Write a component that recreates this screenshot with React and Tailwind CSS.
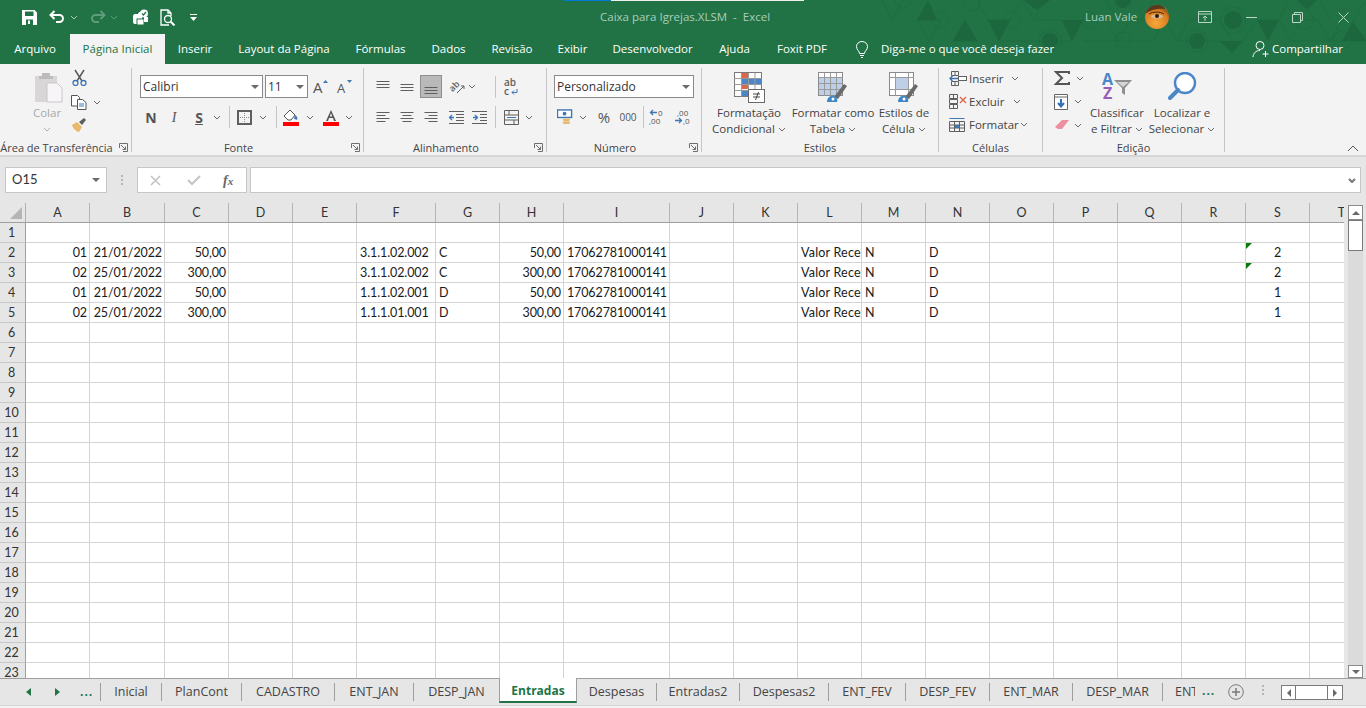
import React from "react";

const Chev = ({ className = "", color = "#6a6a6a", width = 1 }) => (
  <svg width="8" height="5" viewBox="0 0 8 5" className={`shrink-0 ${className}`} fill="none" stroke={color} strokeWidth={width}>
    <path d="M1 1l3 3 3-3" />
  </svg>
);

const Caret = () => (
  <svg width="8" height="4" viewBox="0 0 8 4" fill="#6a6a6a" className="shrink-0">
    <path d="M0 0h8L4 4z" />
  </svg>
);

// fixed width slot so the icons land on the same pixels as the ribbon
const Slot = ({ className = "", children }) => (
  <div className={`flex shrink-0 items-center justify-center ${className}`}>{children}</div>
);

const Sep = ({ className = "" }) => <div className={`h-[22px] w-px shrink-0 bg-[#c6c6c6] ${className}`}></div>;

const Lines = ({ ys, ws, x = [] }) => (
  <svg width="16" height="16" viewBox="0 0 16 16" stroke="#5f5f5f" strokeWidth="1">
    {ys.map((y, i) => (
      <path key={y} d={`M${x[i] ?? 1.5} ${y + 0.5}h${ws[i]}`} />
    ))}
  </svg>
);

const Launcher = () => (
  <svg width="9" height="9" viewBox="0 0 9 9" fill="none" stroke="#6f6f6f" className="absolute bottom-0 right-[3px]">
    <path d="M.5 5V.5H8.500V8.500H4" />
    <path d="M2 2l4.500 4.500M6.500 3.500v3h-3" />
  </svg>
);

function Group({ w, label, launcher, children }) {
  return (
    <div className={`relative flex h-[84px] shrink-0 flex-col border-r border-[#c6c6c6] ${w}`}>
      <div className="h-[68px]">{children}</div>
      <div className={`h-[16px] whitespace-nowrap text-center text-[11px] leading-[24px] text-[#444] ${launcher ? "pr-[18px]" : ""}`}>{label}</div>
      {launcher && <Launcher />}
    </div>
  );
}

function HexPattern() {
  const line = "#196a3e";
  const dark = "#1d673e";
  return (
    <svg width="1366" height="64" viewBox="0 0 1366 64" className="pointer-events-none absolute left-0 top-0" fill="none" stroke={line} strokeOpacity=".6">
      <path d="M882 0l10 20 11-20M917 20h24M917 20l12 21 12-21M929 41l-12 21M953 41h24M965 20l12 21M965 20l-12 21M977 0l11 20h22l-11 21-11-21M999 41h51M1010 20l12-20M1022 0l12 20 12-20M1034 20h28l10 21 11-21h24l11 21 12-21h20M1050 41h22M1083 41h70M1118 20l-12-20M1142 20l11-20M1165 20l-12 21M1165 20l12 21 12-21h31l12 21M1177 41h43M1243 41l14-21h22l11 21 11-21h17l12 21 12-21M1290 41h52M1342 41h24M1353 22l-11 19M1279 20l10-20M1330 20l-10-20M1353 22l13-22" />
      <circle cx="903" cy="0" r="8" />
      <circle cx="940" cy="20" r="8" />
      <circle cx="972" cy="3" r="8" />
      <circle cx="1012" cy="20" r="8" />
      <circle cx="1090" cy="20" r="8" />
      <circle cx="1123" cy="40" r="8" />
      <circle cx="1050" cy="41" r="11" />
      <circle cx="1197" cy="41" r="11" />
      <circle cx="1233" cy="20" r="13" />
      <circle cx="1305" cy="20" r="9" />
      <circle cx="1342" cy="40" r="9" />
      <g fill={dark} stroke="none">
        <path d="M928 0l-11 20h20zM965 20l-12 21h24zM988 20h22l-11 21zM1062 20h21l-11 21zM1257 20h22l-11 21zM1220 41h23l-11 12zM1353 22l-11 19h24v-1zM1297 0h20l-10 10zM1023 0h27l-13 10z" />
        <circle cx="1050" cy="41" r="8" />
        <circle cx="1197" cy="41" r="8" />
        <circle cx="1233" cy="20" r="9" />
        <circle cx="1123" cy="0" r="8" />
      </g>
    </svg>
  );
}

function Avatar() {
  return (
    <svg width="24" height="24" viewBox="0 0 24 24" className="shrink-0">
      <defs>
        <radialGradient id="face" cx=".45" cy=".75" r=".75">
          <stop offset="0" stopColor="#f6a83c" />
          <stop offset=".7" stopColor="#d97c22" />
          <stop offset="1" stopColor="#7a4a18" />
        </radialGradient>
        <clipPath id="round">
          <circle cx="12" cy="12" r="12" />
        </clipPath>
      </defs>
      <g clipPath="url(#round)">
        <rect width="24" height="24" fill="url(#face)" />
        <path d="M0 0h22v4C14 3 6 4 0 9z" fill="#5a3a1a" />
        <path d="M17 0h7v7z" fill="#f5f0e6" />
        <ellipse cx="12" cy="11.500" rx="6" ry="2" fill="#d8b890" />
        <circle cx="12" cy="11" r="2" fill="#2a1a10" />
        <path d="M4 9c4-2.500 11-2.500 15 0" stroke="#3a2410" strokeWidth="1" fill="none" />
      </g>
    </svg>
  );
}

function TitleBar() {
  return (
    <div className="relative flex h-[34px] items-center text-white">
      <div className="absolute left-[563px] top-0 flex h-px">
        <div className="w-[48px] bg-[#0078d7]"></div>
        <div className="w-[193px] bg-[#f0f0f0]"></div>
      </div>
      <div className="flex h-full w-[600px] shrink-0 items-center">
        <Slot className="ml-[21px] w-[16px]">
          <svg width="15" height="15" viewBox="0 0 15 15">
            <path fillRule="evenodd" fill="#fff" d="M0 0h12.500L15 2.500V15H0zM3 1.500V6h8.500V1.500zM4 9.500V15h7V9.500z" />
            <rect x="6" y="10.500" width="2" height="3.500" fill="#fff" />
          </svg>
        </Slot>
        <Slot className="ml-[11px] w-[18px]">
          <svg width="16" height="14" viewBox="0 0 16 14" fill="none" stroke="#fff" strokeWidth="2">
            <path d="M2 5h8.500a3.500 3.500 0 010 7H7M5.500 1L1.500 5l4 4" />
          </svg>
        </Slot>
        <Slot className="ml-[2px] w-[12px]"><Chev color="#a7c9b6" /></Slot>
        <Slot className="ml-[9px] w-[18px]">
          <svg width="16" height="14" viewBox="0 0 16 14" fill="none" stroke="#5f9c7c" strokeWidth="2">
            <path d="M14 5H5.500a3.500 3.500 0 000 7H9M10.500 1l4 4-4 4" />
          </svg>
        </Slot>
        <Slot className="ml-[1px] w-[12px]"><Chev color="#5f9c7c" /></Slot>
        <Slot className="ml-[10px] w-[20px]">
          <svg width="17" height="17" viewBox="0 0 17 17">
            <path d="M3 5h3l1-2h3v12H3a2 2 0 01-2-2V7a2 2 0 012-2z" fill="#fff" />
            <rect x="5" y="10" width="7" height="6" fill="#fff" stroke="#217346" />
            <path d="M12 8h4v5h-4z" fill="#fff" />
            <circle cx="12" cy="4.500" r="4" fill="#fff" />
            <path d="M10 4.500l1.500 1.500 2.500-3" stroke="#217346" strokeWidth="1.200" fill="none" />
          </svg>
        </Slot>
        <Slot className="ml-[8px] w-[20px]">
          <svg width="16" height="17" viewBox="0 0 16 17" fill="none" stroke="#fff" strokeWidth="1.300">
            <path d="M9 16H1V1h7l3 3v3" />
            <path d="M8 1v3h3" />
            <circle cx="8" cy="10" r="3.500" />
            <path d="M10.500 12.500l4 4" strokeWidth="2" />
          </svg>
        </Slot>
        <Slot className="ml-[9px] w-[12px]">
          <svg width="7" height="7" viewBox="0 0 7 7" fill="#fff">
            <path d="M0 0h7v1H0zM0 3h7L3.500 7z" />
          </svg>
        </Slot>
      </div>
      <div className="w-[485px] shrink-0 whitespace-pre text-[11.5px] text-[#a9cdb9]">Caixa para Igrejas.XLSM  -  Excel</div>
      <div className="w-[60px] shrink-0 whitespace-nowrap text-[11.5px] text-[#a9cdb9]">Luan Vale</div>
      <Avatar />
      <Slot className="ml-[28px] w-[16px]">
        <svg width="14" height="12" viewBox="0 0 14 12" fill="none" stroke="#b9d6c6">
          <path d="M.5.500h13v11H.5zM.5 3h13M7 10V5M5 7l2-2 2 2" />
        </svg>
      </Slot>
      <Slot className="ml-[30px] w-[16px]">
        <div className="h-px w-[11px] bg-[#b9d6c6]"></div>
      </Slot>
      <Slot className="ml-[30px] w-[16px]">
        <svg width="11" height="11" viewBox="0 0 11 11" fill="none" stroke="#b9d6c6">
          <path d="M.5 2.500h8v8h-8zM2.500 2.500V.5h8v8H8.500" />
        </svg>
      </Slot>
      <Slot className="ml-[30px] w-[16px]">
        <svg width="11" height="11" viewBox="0 0 11 11" fill="none" stroke="#b9d6c6">
          <path d="M.5.500l10 10M10.500.500l-10 10" />
        </svg>
      </Slot>
    </div>
  );
}

const ribbonTabs = [
  { name: "Arquivo", w: "w-[70px]" },
  { name: "Página Inicial", w: "w-[95px]", active: true },
  { name: "Inserir", w: "w-[60px]" },
  { name: "Layout da Página", w: "w-[118px]" },
  { name: "Fórmulas", w: "w-[75px]" },
  { name: "Dados", w: "w-[61px]" },
  { name: "Revisão", w: "w-[66px]" },
  { name: "Exibir", w: "w-[55px]" },
  { name: "Desenvolvedor", w: "w-[105px]" },
  { name: "Ajuda", w: "w-[59px]" },
  { name: "Foxit PDF", w: "w-[76px]" },
];

function TabsBar() {
  return (
    <div className="relative flex h-[30px] items-center text-[11.5px] text-white">
      {ribbonTabs.map((t) => (
        <div
          key={t.name}
          className={`flex h-full shrink-0 items-center justify-center whitespace-nowrap ${t.w} ${
            t.active ? "bg-[#f3f3f3] text-[#217346]" : ""
          }`}
        >
          {t.name}
        </div>
      ))}
      <svg width="14" height="17" viewBox="0 0 14 17" fill="none" stroke="#fff" className="ml-[15px] shrink-0">
        <path d="M4.500 12.500c0-2.500-3-3.500-3-7a5.500 5 0 0111 0c0 3.500-3 4.500-3 7zM5 14.500h4M6 16.500h2" />
      </svg>
      <div className="ml-[12px] w-[371px] shrink-0 whitespace-nowrap">Diga-me o que você deseja fazer</div>
      <svg width="19" height="18" viewBox="0 0 19 18" fill="none" stroke="#fff" className="shrink-0">
        <circle cx="8" cy="5.500" r="4" />
        <path d="M1 17c.5-4 3-6.500 7-6.500M13.500 11v6M10.500 14h6" />
      </svg>
      <div className="ml-[1px] whitespace-nowrap">Compartilhar</div>
    </div>
  );
}

const Select = ({ w, text }) => (
  <div className={`flex h-[23px] shrink-0 items-center justify-between border border-[#8a8a8a] bg-white pl-[2px] pr-[3px] text-[12px] text-[#333] ${w}`}>
    <span>{text}</span>
    <Caret />
  </div>
);

function BigA({ up }) {
  return (
    <svg width="20" height="18" viewBox="0 0 20 18">
      <text x="2" y="15" fontFamily="'Open Sans', sans-serif" fontSize={up ? 15 : 13} fill="#555">A</text>
      <path d={up ? "M12 5l2.500-3 2.500 3z" : "M12 2h5l-2.500 3z"} fill="#3f76b5" />
    </svg>
  );
}

function Clipboard() {
  return (
    <Group w="w-[132px]" label="Área de Transferência" launcher>
      <div className="flex h-full">
        <div className="ml-[27px] flex w-[40px] flex-col items-center pt-[4px] text-[#a9a9a9]">
          <svg width="30" height="31" viewBox="0 0 30 31" className="ml-[3px]">
            <path d="M1 4h22v26H1z" fill="#d8d6d6" />
            <path d="M8 1h8v3h3v3H5V4h3z" fill="#bdbbbb" />
            <path d="M13 11h10l5 5v14H13z" fill="#f7f5f7" stroke="#c9c7c9" />
          </svg>
          <div className="mt-[2px] text-[11.5px] leading-[16px]">Colar</div>
          <Chev className="mt-[6px]" color="#b0b0b0" />
        </div>
        <div className="ml-[3px] flex flex-col">
          <div className="flex h-[20px] w-[18px] items-center justify-center">
            <svg width="15" height="17" viewBox="0 0 15 17" fill="none">
              <path d="M3 1l7 11M12 1L5 12" stroke="#555" strokeWidth="1.400" />
              <circle cx="3.500" cy="14" r="2.500" stroke="#3f76b5" strokeWidth="1.300" />
              <circle cx="11.500" cy="14" r="2.500" stroke="#3f76b5" strokeWidth="1.300" />
            </svg>
          </div>
          <div className="mt-[4px] flex h-[22px] items-center">
            <svg width="16" height="15" viewBox="0 0 16 15" fill="#fff" stroke="#555" className="ml-[1px] shrink-0">
              <path d="M.5.500h6l2 2V11H.5z" />
              <path d="M6.500 4.500h5l3.500 3V14.500H6.500z" />
              <path d="M8 9h5M8 11h5" stroke="#3f76b5" />
            </svg>
            <Chev className="ml-[6px]" />
          </div>
          <div className="mt-[1px] flex h-[22px] w-[18px] items-center justify-center">
            <svg width="16" height="16" viewBox="0 0 16 16">
              <path d="M1 8l5-3 5 5-3 5C6 15 2 12 1 8z" fill="#e8b96b" />
              <path d="M8 5l5-4 2 2-4 5z" fill="#5e5e5e" />
            </svg>
          </div>
        </div>
      </div>
    </Group>
  );
}

function Font() {
  return (
    <Group w="w-[232px]" label="Fonte" launcher>
      <div className="flex pl-[8px] pt-[7px]">
        <Select w="w-[123px]" text="Calibri" />
        <Select w="w-[43px] ml-[2px]" text="11" />
        <Slot className="ml-[3px] h-[23px] w-[20px]"><BigA up /></Slot>
        <Slot className="ml-[4px] h-[23px] w-[20px]"><BigA /></Slot>
      </div>
      <div className="mt-[8px] flex h-[22px] items-center text-[14px] text-[#555]">
        <Slot className="ml-[9px] w-[20px] font-bold">N</Slot>
        <Slot className="ml-[3px] w-[20px] font-['Liberation_Serif'] italic">I</Slot>
        <Slot className="ml-[5px] w-[20px] font-bold underline">S</Slot>
        <Slot className="ml-[2px] w-[12px]"><Chev /></Slot>
        <Sep className="ml-[6px]" />
        <svg width="15" height="15" viewBox="0 0 15 15" fill="none" className="ml-[7px] shrink-0">
          <rect x="1" y="1" width="13" height="13" stroke="#5f5f5f" strokeWidth="2" />
          <path d="M7.500 3v9M3 7.500h9" stroke="#8a8a8a" strokeDasharray="1 1" />
        </svg>
        <Slot className="ml-[5px] w-[12px]"><Chev /></Slot>
        <Sep className="ml-[7px]" />
        <svg width="16" height="17" viewBox="0 0 16 17" className="ml-[6px] shrink-0">
          <path d="M1 7l6-6 5 5-4 5H5z" fill="#fff" stroke="#555" />
          <path d="M12 6c2 1 3 3 2 5-1-1-2-1-3-1z" fill="#3f76b5" />
          <rect y="13" width="16" height="4" fill="#f00" />
        </svg>
        <Slot className="ml-[5px] w-[12px]"><Chev /></Slot>
        <svg width="16" height="17" viewBox="0 0 16 17" className="ml-[7px] shrink-0">
          <path d="M8 1L3 12h2l1-3h4l1 3h2zM6.800 7.500L8 4l1.200 3.500z" fill="#555" fillRule="evenodd" />
          <rect y="13" width="16" height="4" fill="#f00" />
        </svg>
        <Slot className="ml-[4px] w-[12px]"><Chev /></Slot>
      </div>
    </Group>
  );
}

function Alignment() {
  return (
    <Group w="w-[183px]" label="Alinhamento" launcher>
      <div className="mt-[7px] flex h-[23px] items-center">
        <Slot className="ml-[11px] w-[16px]"><Lines ys={[2, 5, 8]} ws={[13, 13, 13]} /></Slot>
        <Slot className="ml-[8px] w-[16px]"><Lines ys={[5, 8, 11]} ws={[13, 13, 13]} /></Slot>
        <Slot className="ml-[5px] h-[23px] w-[22px] border border-[#8f8f8f] bg-[#b9b9b9]"><Lines ys={[8, 11, 14]} ws={[13, 13, 13]} /></Slot>
        <Slot className="ml-[6px] w-[18px]">
          <svg width="17" height="17" viewBox="0 0 17 17" fill="none">
            <text x="1" y="12" fontSize="9" fontWeight="600" fill="#5f5f5f" fontFamily="'Open Sans', sans-serif" transform="rotate(-45 5 10)">ab</text>
            <path d="M8 15l7-7M15 8h-3M15 8v3" stroke="#5f5f5f" />
          </svg>
        </Slot>
        <Slot className="w-[12px]"><Chev /></Slot>
        <Sep className="ml-[17px]" />
        <Slot className="ml-[7px] w-[16px]">
          <svg width="16" height="18" viewBox="0 0 16 18" fill="none">
            <text x="1" y="8" fontSize="10" fontWeight="600" fill="#5f5f5f" fontFamily="'Open Sans', sans-serif">ab</text>
            <text x="1" y="17" fontSize="10" fontWeight="600" fill="#5f5f5f" fontFamily="'Open Sans', sans-serif">c</text>
            <path d="M14 11v3.500H9M11 12.500l-2 2 2 2" stroke="#3f76b5" />
          </svg>
        </Slot>
      </div>
      <div className="mt-[8px] flex h-[22px] items-center">
        <Slot className="ml-[11px] w-[16px]"><Lines ys={[3, 6, 9, 12]} ws={[13, 9, 13, 9]} /></Slot>
        <Slot className="ml-[8px] w-[16px]"><Lines ys={[3, 6, 9, 12]} ws={[13, 9, 13, 9]} x={[1.5, 3.5, 1.5, 3.5]} /></Slot>
        <Slot className="ml-[8px] w-[16px]"><Lines ys={[3, 6, 9, 12]} ws={[13, 9, 13, 9]} x={[1.5, 5.5, 1.5, 5.5]} /></Slot>
        <Slot className="ml-[9px] w-[16px]">
          <svg width="16" height="14" viewBox="0 0 16 14" fill="none" stroke="#5f5f5f">
            <path d="M1 1.500h15M8 4.500h8M8 7.500h8M8 10.500h8M1 13.500h15" />
            <path d="M6 7.500H2M4 5L1.500 7.500 4 10" stroke="#3f76b5" strokeWidth="1.300" />
          </svg>
        </Slot>
        <Slot className="ml-[8px] w-[16px]">
          <svg width="16" height="14" viewBox="0 0 16 14" fill="none" stroke="#5f5f5f">
            <path d="M0 1.500h15M8 4.500h7M8 7.500h7M8 10.500h7M0 13.500h15" />
            <path d="M1 7.500h4M3 5l2.500 2.500L3 10" stroke="#3f76b5" strokeWidth="1.300" />
          </svg>
        </Slot>
        <Sep className="ml-[7px]" />
        <Slot className="ml-[7px] w-[16px]">
          <svg width="15" height="15" viewBox="0 0 15 15" fill="none" stroke="#5f5f5f">
            <path d="M.5.500h14v14H.5zM.5 5h14M.5 10h14M5 .5V5M10 10v4.500" />
            <path d="M3 7.500h9" stroke="#3f76b5" />
          </svg>
        </Slot>
        <Slot className="ml-[4px] w-[12px]"><Chev /></Slot>
      </div>
    </Group>
  );
}

function NumberGroup() {
  return (
    <Group w="w-[155px]" label="Número" launcher>
      <div className="pl-[7px] pt-[7px]">
        <Select w="w-[140px]" text="Personalizado" />
      </div>
      <div className="mt-[8px] flex h-[22px] items-center text-[#555]">
        <Slot className="ml-[10px] w-[16px]">
          <svg width="17" height="16" viewBox="0 0 17 16">
            <rect x=".5" y=".5" width="15" height="8" fill="#fff" stroke="#3f76b5" strokeWidth="1.500" />
            <circle cx="8" cy="4.500" r="2" fill="#3f76b5" />
            <ellipse cx="10" cy="11" rx="4" ry="1.500" fill="#e8b96b" />
            <ellipse cx="10" cy="14" rx="4" ry="1.500" fill="#e8b96b" />
          </svg>
        </Slot>
        <Slot className="ml-[4px] w-[12px]"><Chev /></Slot>
        <Slot className="ml-[6px] w-[18px] text-[15px]">%</Slot>
        <Slot className="ml-[5px] w-[20px] text-[10px]">000</Slot>
        <Sep className="ml-[5px]" />
        <svg width="16" height="16" viewBox="0 0 16 16" className="ml-[5px] shrink-0" fill="none">
          <path d="M8 3.500H2M4 1L1.500 3.500 4 6" stroke="#3f76b5" strokeWidth="1.300" />
          <text x="9" y="7" fontSize="8" fill="#555" fontFamily="'Open Sans', sans-serif">0</text>
          <text x="0" y="15" fontSize="8" fill="#555" fontFamily="'Open Sans', sans-serif">,00</text>
        </svg>
        <svg width="16" height="16" viewBox="0 0 16 16" className="ml-[9px] shrink-0" fill="none">
          <path d="M1 11.500h6M5 9l2.500 2.500L5 14" stroke="#3f76b5" strokeWidth="1.300" />
          <text x="3" y="7" fontSize="8" fill="#555" fontFamily="'Open Sans', sans-serif">,00</text>
          <text x="9" y="15" fontSize="8" fill="#555" fontFamily="'Open Sans', sans-serif">,0</text>
        </svg>
      </div>
    </Group>
  );
}

function BigButton({ w, icon, l1, l2 }) {
  return (
    <div className={`flex shrink-0 flex-col items-center text-[11.5px] leading-[16px] text-[#444] ${w}`}>
      <div className="flex h-[37px] justify-center pt-[4px]">{icon}</div>
      <div className="whitespace-nowrap">{l1}</div>
      <div className="flex items-center gap-[3px] whitespace-nowrap">
        {l2}
        <Chev />
      </div>
    </div>
  );
}

function CondIcon() {
  return (
    <svg width="31" height="31" viewBox="0 0 31 31">
      <rect x=".5" y=".5" width="27" height="24" fill="#fff" stroke="#7a7a7a" />
      <path d="M8 1h6v5H8zM8 12h6v5H8z" fill="#d9694a" />
      <path d="M8 7h19v5H8zM8 18h6v6H8z" fill="#4a86c8" />
      <path d="M.5 6.500h27M.5 12.500h27M.5 18.500h27M7.500 1v24M14.500 1v24M21 1v24" stroke="#9a9a9a" fill="none" />
      <rect x="14.500" y="17.500" width="16" height="13" fill="#fff" stroke="#6a6a6a" />
      <path d="M19 22h7M19 25h7M24.500 20l-3 8" stroke="#444" fill="none" />
    </svg>
  );
}

function TableIcon({ full }) {
  return (
    <svg width="31" height="31" viewBox="0 0 31 31">
      <rect x=".5" y=".5" width="24" height="23" fill="#fff" stroke="#8a8a8a" />
      {full ? (
        <>
          <rect x="1" y="5" width="23" height="18" fill="#bdd0e8" />
          <path d="M.5 5.500h24M.5 11.500h24M.5 17.500h24M6.500 1v23M12.500 1v23M18.500 1v23" stroke="#9a9a9a" fill="none" />
        </>
      ) : (
        <>
          <rect x="6" y="6" width="14" height="11" fill="#bdd0e8" />
          <path d="M.5 5.500h24M.5 17.500h24M6.500 1v23M19.500 1v23" stroke="#9a9a9a" fill="none" />
        </>
      )}
      <path d="M16 25l10-13 3 2-9 13z" fill="#6a6a6a" />
      <path d="M9 30c0-4 3-7 7-6 2 1 4 3 3 6z" fill="#3f86c8" />
      <circle cx="15" cy="27" r="1.500" fill="#fff" />
    </svg>
  );
}

function Styles() {
  return (
    <Group w="w-[237px]" label="Estilos">
      <div className="flex">
        <BigButton w="w-[94px]" icon={<CondIcon />} l1="Formatação" l2="Condicional" />
        <BigButton w="w-[74px]" icon={<TableIcon full />} l1="Formatar como" l2="Tabela" />
        <BigButton w="w-[68px]" icon={<TableIcon />} l1="Estilos de" l2="Célula" />
      </div>
    </Group>
  );
}

const cellRows = [
  {
    text: "Inserir",
    w: "w-[42px]",
    icon: (
      <>
        <path d="M2.500.500h7v4h-7zM2.500 10.500h7v4h-7zM6 .5v4M6 10.500v4M2.500 5.500v4" />
        <rect x="9.500" y="5.500" width="8" height="4" fill="#fff" stroke="#5f5f5f" />
        <path d="M9 7.500H1M3.500 5L1 7.500 3.500 10" stroke="#3f76b5" strokeWidth="1.400" />
      </>
    ),
  },
  {
    text: "Excluir",
    w: "w-[44px]",
    icon: (
      <>
        <path d="M.5.500h8v4h-8zM.5 10.500h8v4h-8zM4.500.500v4M4.500 10.500v4M.5 5.500h8v4h-8z" />
        <path d="M11 3l6 6M17 3l-6 6" stroke="#d9694a" strokeWidth="1.400" />
      </>
    ),
  },
  {
    text: "Formatar",
    w: "w-[51px]",
    icon: (
      <>
        <path d="M.5 4.500h15v10H.5zM.5 8h15M.5 11h15M5.500 4.500v10M10.500 4.500v10" />
        <path d="M.5 1.500h15" stroke="#3f76b5" />
        <rect x="6" y="8" width="4" height="3" fill="#3f76b5" stroke="none" />
      </>
    ),
  },
];

function Cells() {
  return (
    <Group w="w-[104px]" label="Células">
      <div className="-mt-px flex flex-col">
        {cellRows.map((r) => (
          <div key={r.text} className="flex h-[23px] items-center text-[11.5px] text-[#444]">
            <svg width="18" height="15" viewBox="0 0 18 15" fill="none" stroke="#5f5f5f" className="ml-[10px] shrink-0">
              {r.icon}
            </svg>
            <div className={`ml-[2px] shrink-0 ${r.w}`}>{r.text}</div>
            <Chev />
          </div>
        ))}
      </div>
    </Group>
  );
}

function Editing() {
  return (
    <Group w="w-[182px]" label="Edição">
      <div className="flex">
        <div className="flex w-[44px] shrink-0 flex-col">
          <div className="flex h-[19px] items-center pl-[11px] pt-[1px]">
            <svg width="16" height="14" viewBox="0 0 16 14" fill="none" stroke="#555" strokeWidth="2" className="shrink-0">
              <path d="M15 3V1H2l6 6-6 6h13v-2" />
            </svg>
            <Chev className="ml-[6px]" />
          </div>
          <div className="mt-[4px] flex h-[21px] items-center pl-[11px]">
            <svg width="14" height="16" viewBox="0 0 14 16" fill="#fff" stroke="#666" className="shrink-0">
              <path d="M.5.500h13v15H.5zM.5 3h13" />
              <path d="M7 5v7M4 9l3 3.500L10 9" stroke="#2f6fb5" strokeWidth="2" fill="none" />
            </svg>
            <Chev className="ml-[6px]" />
          </div>
          <div className="mt-[2px] flex h-[22px] items-center pl-[11px]">
            <svg width="16" height="13" viewBox="0 0 16 13" className="shrink-0">
              <path d="M1 8l7-7h7l-7 9H4z" fill="#ee8fa0" />
            </svg>
            <Chev className="ml-[4px]" />
          </div>
        </div>
        <BigButton
          w="w-[60px]"
          l1="Classificar"
          l2="e Filtrar"
          icon={
            <svg width="32" height="30" viewBox="0 0 32 30">
              <text x="1" y="13" fontFamily="'Open Sans', sans-serif" fontWeight="700" fontSize="16" fill="#4a86c8">A</text>
              <text x="2" y="27" fontFamily="'Open Sans', sans-serif" fontWeight="700" fontSize="16" fill="#9a5cb8">Z</text>
              <path d="M13 8h18l-7 8v7l-3-2v-5z" fill="#8f8f8f" />
              <path d="M16 10h12l-6 5z" fill="#d5d5d5" />
            </svg>
          }
        />
        <BigButton
          w="w-[66px] ml-[2px]"
          l1="Localizar e"
          l2="Selecionar"
          icon={
            <svg width="29" height="29" viewBox="0 0 29 29" fill="none" stroke="#4a86c8">
              <circle cx="17" cy="11" r="10" strokeWidth="2.400" fill="#fff" />
              <path d="M10 18l-8 8" strokeWidth="4" strokeLinecap="round" />
            </svg>
          }
        />
      </div>
    </Group>
  );
}

function Ribbon() {
  return (
    <div className="relative flex h-[93px] border-b-2 border-[#d6d6d6] bg-[#f3f3f3] pt-[4px]">
      <Clipboard />
      <Font />
      <Alignment />
      <NumberGroup />
      <Styles />
      <Cells />
      <Editing />
      <svg width="12" height="7" viewBox="0 0 12 7" fill="none" stroke="#555" className="absolute bottom-[3px] right-[7px]">
        <path d="M1 6l5-5 5 5" />
      </svg>
    </div>
  );
}

function FormulaBar() {
  return (
    <div className="flex h-[46px] bg-[#e6e6e6] pl-[5px] pt-[10px]">
      <div className="flex h-[26px] w-[102px] shrink-0 items-center justify-between border border-[#c6c6c6] bg-white pl-[6px] pr-[6px] font-['Lato'] text-[13px] text-[#333]">
        O15
        <Caret />
      </div>
      <div className="flex h-[26px] w-[30px] shrink-0 flex-col items-center justify-center gap-[2px]">
        <div className="h-[2px] w-[2px] bg-[#b5b5b5]"></div>
        <div className="h-[2px] w-[2px] bg-[#b5b5b5]"></div>
        <div className="h-[2px] w-[2px] bg-[#b5b5b5]"></div>
      </div>
      <div className="flex h-[26px] w-[110px] shrink-0 items-center border border-[#c6c6c6] bg-white">
        <svg width="11" height="11" viewBox="0 0 11 11" stroke="#c4c4c4" strokeWidth="1.600" fill="none" className="ml-[12px]">
          <path d="M1 1l9 9M10 1l-9 9" />
        </svg>
        <svg width="14" height="11" viewBox="0 0 14 11" stroke="#c4c4c4" strokeWidth="2" fill="none" className="ml-[26px]">
          <path d="M1 5l4 4 8-8" />
        </svg>
        <span className="ml-[22px] font-['Liberation_Serif'] text-[14px] font-bold italic text-[#666]">f<span className="text-[11px]">x</span></span>
      </div>
      <div className="ml-[3px] flex h-[26px] w-[1111px] shrink-0 items-center justify-end border border-[#c6c6c6] bg-white pr-[4px]">
        <Chev color="#777" width={2} />
      </div>
    </div>
  );
}

const cols = ["A", "B", "C", "D", "E", "F", "G", "H", "I", "J", "K", "L", "M", "N", "O", "P", "Q", "R", "S", "T"];

const data = [
  ["01", "21/01/2022", "50,00", "3.1.1.02.002", "C", "50,00", "2"],
  ["02", "25/01/2022", "300,00", "3.1.1.02.002", "C", "300,00", "2"],
  ["01", "21/01/2022", "50,00", "1.1.1.02.001", "D", "50,00", "1"],
  ["02", "25/01/2022", "300,00", "1.1.1.01.001", "D", "300,00", "1"],
];

function getCell(rowIdx, col) {
  const r = data[rowIdx - 2];
  if (!r) return null;
  switch (col) {
    case "A": return { v: r[0], a: "right" };
    case "B": return { v: r[1], a: "right" };
    case "C": return { v: r[2], a: "right" };
    case "F": return { v: r[3], a: "left" };
    case "G": return { v: r[4], a: "left" };
    case "H": return { v: r[5], a: "right" };
    case "I": return { v: "17062781000141", a: "right" };
    case "L": return { v: "Valor Recebido", a: "left", wide: true };
    case "M": return { v: "N", a: "left" };
    case "N": return { v: "D", a: "left" };
    case "S": return { v: r[6], a: "center", flag: rowIdx < 4 };
    default: return null;
  }
}

const alignClass = { right: "justify-end pr-[2px]", left: "justify-start pl-[3px]", center: "justify-center" };

function Sheet() {
  const rows = Array.from({ length: 23 }, (_, i) => i + 1);
  return (
    <div className="flex h-[475px] bg-[#e6e6e6]">
      <div className="w-[1344px] shrink-0 overflow-hidden">
        <div className="grid w-max grid-cols-[26px_64px_75px_64px_64px_64px_79px_64px_64px_106px_64px_64px_64px_64px_64px_64px_64px_64px_64px_64px_64px] font-['Lato'] text-[12.5px] text-[#1a1a1a]">
          <div className="flex h-[20px] items-end justify-end border-r border-b border-r-[#b0b0b0] border-b-[#9f9f9f] pb-[3px] pr-[3px]">
            <div className="h-0 w-0 border-b-[12px] border-l-[12px] border-b-[#b5b5b5] border-l-transparent"></div>
          </div>
          {cols.map((c) => (
            <div key={c} className="flex h-[20px] items-center justify-center border-r border-b border-r-[#b5b5b5] border-b-[#9f9f9f] pt-px text-[#333]">
              {c}
            </div>
          ))}
          {rows.map((n) => (
            <React.Fragment key={n}>
              <div className="flex h-[20px] items-center justify-center border-r border-b border-r-[#9f9f9f] border-b-[#c8c8c8] pr-[2px] pt-[2px] text-[#333]">
                {n}
              </div>
              {cols.map((c) => {
                const cell = getCell(n, c);
                return (
                  <div key={c} className={`relative flex h-[20px] items-center overflow-hidden whitespace-nowrap border-r border-b border-[#d4d4d4] bg-white pt-[2px] ${cell?.wide ? "tracking-[0.2px]" : "tracking-[-0.1px]"} ${cell ? alignClass[cell.a] : ""}`}>
                    {cell?.flag && (
                      <div className="absolute left-0 top-0 h-0 w-0 border-r-[6px] border-t-[6px] border-r-transparent border-t-[#0a7a0a]"></div>
                    )}
                    {cell?.v}
                  </div>
                );
              })}
            </React.Fragment>
          ))}
        </div>
      </div>
      <div className="ml-[4px] flex w-[15px] shrink-0 flex-col pt-[2px]">
        <div className="flex h-[15px] items-center justify-center border border-[#8a8a8a] bg-white">
          <svg width="8" height="4" viewBox="0 0 8 4" fill="#6a6a6a"><path d="M0 4h8L4 0z" /></svg>
        </div>
        <div className="h-[31px] border border-[#7a7a7a] bg-white"></div>
        <div className="flex-1 bg-[#dbdbdb]"></div>
        <div className="flex h-[13px] items-center justify-center border border-[#8a8a8a] bg-white">
          <Caret />
        </div>
      </div>
    </div>
  );
}

const sheets = [
  { name: "Inicial", w: "w-[61px]" },
  { name: "PlanCont", w: "w-[80px]" },
  { name: "CADASTRO", w: "w-[93px]" },
  { name: "ENT_JAN", w: "w-[79px]" },
  { name: "DESP_JAN", w: "w-[86px]" },
  { name: "Entradas", w: "w-[78px]", active: true },
  { name: "Despesas", w: "w-[80px]" },
  { name: "Entradas2", w: "w-[83px]" },
  { name: "Despesas2", w: "w-[89px]" },
  { name: "ENT_FEV", w: "w-[77px]" },
  { name: "DESP_FEV", w: "w-[84px]" },
  { name: "ENT_MAR", w: "w-[83px]" },
  { name: "DESP_MAR", w: "w-[90px]" },
];

function SheetTabs() {
  return (
    <div className="flex h-[28px] items-start border-t border-b border-t-[#9f9f9f] border-b-[#d4d4d4] bg-[#e6e6e6] text-[12.5px] text-[#444]">
      <div className="flex h-[26px] w-[100px] shrink-0 items-center">
        <svg width="5" height="8" viewBox="0 0 5 8" fill="#217346" className="ml-[26px] shrink-0"><path d="M5 0v8L0 4z" /></svg>
        <svg width="5" height="8" viewBox="0 0 5 8" fill="#217346" className="ml-[24px] shrink-0"><path d="M0 0v8l5-4z" /></svg>
        <span className="ml-[20px] text-[12px] font-bold tracking-[1px] text-[#217346]">...</span>
      </div>
      <div className="mt-[4px] h-[18px] w-px shrink-0 bg-[#9f9f9f]"></div>
      {sheets.map((s) =>
        s.active ? (
          <div key={s.name} className={`-ml-px -mt-px flex h-[25px] shrink-0 items-center justify-center border-x border-b-2 border-x-[#9f9f9f] border-b-[#217346] bg-white pt-[2px] text-[12px] font-bold text-[#217346] ${s.w}`}>
            {s.name}
          </div>
        ) : (
          <div key={s.name} className={`mt-[4px] flex h-[18px] shrink-0 items-center justify-center border-r border-[#9f9f9f] whitespace-nowrap ${s.w}`}>
            {s.name}
          </div>
        )
      )}
      <div className="ml-[12px] mt-[4px] flex h-[18px] w-[20px] shrink-0 items-center overflow-hidden whitespace-nowrap">ENT_ABR</div>
      <span className="ml-[7px] mt-[3px] shrink-0 text-[12px] font-bold tracking-[1px] text-[#217346]">...</span>
      <svg width="16" height="16" viewBox="0 0 16 16" fill="none" stroke="#7a7a7a" className="ml-[13px] mt-[5px] shrink-0">
        <circle cx="8" cy="8" r="7.300" />
        <path d="M8 4v8M4 8h8" strokeWidth="1.500" />
      </svg>
      <div className="ml-[18px] mt-[6px] flex shrink-0 flex-col gap-[2px]">
        <div className="h-[2px] w-[2px] bg-[#b5b5b5]"></div>
        <div className="h-[2px] w-[2px] bg-[#b5b5b5]"></div>
        <div className="h-[2px] w-[2px] bg-[#b5b5b5]"></div>
      </div>
      <div className="ml-[17px] mt-[6px] flex h-[15px] w-[62px] shrink-0 border border-[#7a7a7a] bg-white">
        <div className="flex w-[14px] items-center justify-center border-r border-[#7a7a7a]">
          <svg width="4" height="8" viewBox="0 0 4 8" fill="#6a6a6a"><path d="M4 0v8L0 4z" /></svg>
        </div>
        <div className="w-[32px] border-r border-[#7a7a7a]"></div>
        <div className="flex flex-1 items-center justify-center">
          <svg width="4" height="8" viewBox="0 0 4 8" fill="#6a6a6a"><path d="M0 0v8l4-4z" /></svg>
        </div>
      </div>
    </div>
  );
}

export default function App() {
  return (
    <div className="h-[708px] w-[1366px] overflow-hidden bg-[#f3f3f3] font-['Open_Sans',sans-serif]">
      <div className="relative h-[64px] bg-[#217346]">
        <HexPattern />
        <div className="relative">
          <TitleBar />
          <TabsBar />
        </div>
      </div>
      <Ribbon />
      <FormulaBar />
      <Sheet />
      <SheetTabs />
    </div>
  );
}
